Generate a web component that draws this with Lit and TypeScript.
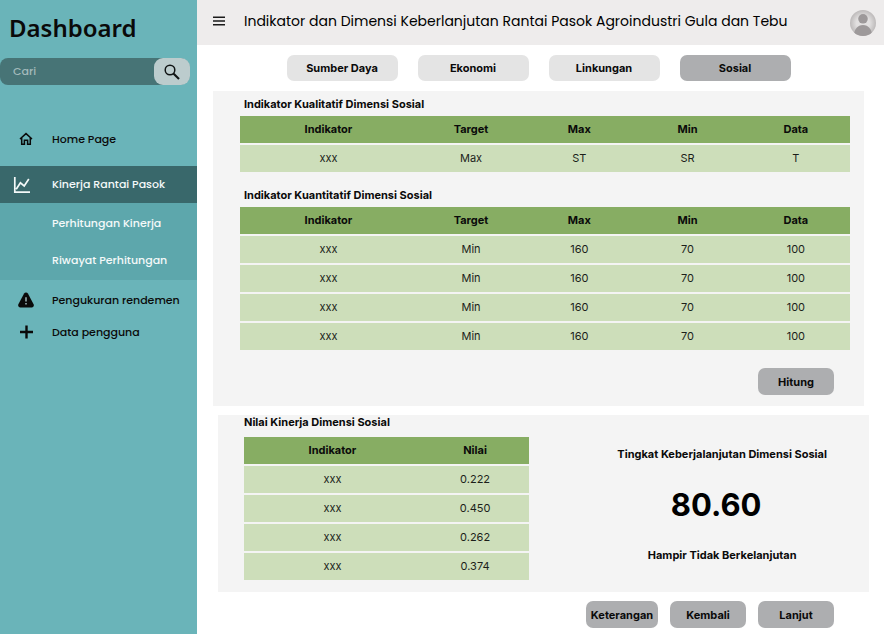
import { LitElement, html, css, svg } from "lit";
import { customElement, property, state } from "lit/decorators.js";
import { classMap } from "lit/directives/class-map.js";

@customElement("data-grid")
class DataGrid extends LitElement {
  @property({ attribute: false }) columns: string[] = [];
  @property({ attribute: false }) rows: string[][] = [];
  @property() label = "";

  static styles = css`
    :host {
      display: block;
    }
    .table {
      width: 100%;
      border-collapse: separate;
      border-spacing: 0;
      table-layout: fixed;
      font-size: 11px;
      line-height: 15px;
      text-align: center;
    }
    .head,
    .cell {
      padding: 6px 0;
      overflow-wrap: anywhere;
    }
    .head {
      background: #87ad63;
      font-weight: 700;
    }
    .cell {
      background: #cddeba;
      background-clip: padding-box;
      border-top: 2px solid #f4f4f4;
      color: #1c1f1a;
    }
    .wide {
      width: 29%;
    }
    .half {
      width: 62%;
    }
  `;

  render() {
    const two = this.columns.length === 2;
    return html`
      <table class="table" aria-label=${this.label}>
        <thead>
          <tr>
            ${this.columns.map(
              (c, i) => html`<th
                scope="col"
                class=${classMap({ head: true, wide: i === 0 && !two, half: i === 0 && two })}
              >${c}</th>`
            )}
          </tr>
        </thead>
        <tbody>
          ${this.rows.map(
            (r) => html`<tr>${r.map((v) => html`<td class="cell">${v}</td>`)}</tr>`
          )}
        </tbody>
      </table>
    `;
  }
}

const homeIcon = svg`<svg class="icon" width="14" height="14" viewBox="0 0 14 14" fill="none" stroke="currentColor" stroke-width="1.5" aria-hidden="true">
  <path d="M1 7 7 1.6 13 7M2.7 5.8V12.3H5.4V8.2H8.6V12.3H11.3V5.8"/>
</svg>`;
const chartIcon = svg`<svg class="icon" width="18" height="18" viewBox="0 0 18 18" fill="none" stroke="currentColor" stroke-width="1.7" aria-hidden="true">
  <path d="M1.8 1V16.2H17M3.2 13.2 7.4 6.8 11.2 10 15.8 3"/>
</svg>`;
const warnIcon = svg`<svg class="icon" width="16" height="16" viewBox="0 0 16 16" aria-hidden="true">
  <path fill="currentColor" d="M8 .4C8.9.4 9.5.8 9.9 1.5L15.6 12.2C16.3 13.7 15.5 15.5 13.7 15.5H2.3C.5 15.5-.3 13.7.4 12.2L6.1 1.5C6.5.8 7.1.4 8 .4Z"/>
  <path stroke="#c4dfe1" stroke-width="1.2" d="M8 5.3V9.6M8 11V12.4"/>
</svg>`;
const plusIcon = svg`<svg class="icon" width="14" height="14" viewBox="0 0 14 14" stroke="currentColor" stroke-width="2.4" aria-hidden="true">
  <path d="M7.5 .6V13.4M1 7H14"/>
</svg>`;
const searchIcon = svg`<svg width="16" height="16" viewBox="0 0 16 16" fill="none" stroke="#101414" aria-hidden="true">
  <circle cx="6" cy="6" r="4.8" stroke-width="1.5"/>
  <path stroke-width="2.1" d="M9.4 9.4 15 15"/>
</svg>`;
const menuIcon = svg`<svg width="12" height="10" viewBox="0 0 12 10" stroke="#1a1a1a" stroke-width="1.5" aria-hidden="true">
  <path d="M0 1.2H12M0 5H12M0 8.8H12"/>
</svg>`;
const avatar = svg`<svg width="26" height="26" viewBox="0 0 26 26" aria-hidden="true">
  <defs>
    <radialGradient id="disc"><stop offset="0.5" stop-color="#e2e0e0"/><stop offset="1" stop-color="#bdbaba"/></radialGradient>
    <clipPath id="round"><circle cx="13" cy="13" r="13"/></clipPath>
  </defs>
  <circle cx="13" cy="13" r="13" fill="url(#disc)"/>
  <g fill="#9d999a" clip-path="url(#round)">
    <circle cx="13" cy="8.8" r="4.8"/>
    <path d="M4 26C4 19 7.6 15 13 15S22 19 22 26Z"/>
  </g>
</svg>`;

const FULL_COLUMNS = ["Indikator", "Target", "Max", "Min", "Data"];

@customElement("app-root")
class AppRoot extends LitElement {
  @state() private tab = "Sosial";

  static styles = css`
    :host {
      display: grid;
      grid-template-columns: 197px minmax(0, 1fr);
      min-height: 100vh;
      background: #fff;
      color: #0a0a0a;
      font-family: Inter, "Liberation Sans", sans-serif;
      font-size: 11px;
    }
    .side {
      background: #6ab4b9;
      font-family: Poppins, Inter, sans-serif;
      font-weight: 500;
    }
    .brand {
      margin: 0;
      padding: 8px 9px 10px;
      font: 600 24px/40px "Noto Sans", sans-serif;
    }
    .search {
      display: flex;
      height: 27px;
      margin-right: 7px;
      background: #477476;
      border-radius: 8px 10px 10px 8px;
    }
    .query {
      flex: 1;
      min-width: 0;
      border: 0;
      padding: 0 13px;
      background: none;
      color: #fff;
      font: inherit;
    }
    .query::placeholder {
      color: #a3babb;
      opacity: 1;
    }
    .find {
      display: grid;
      place-items: center;
      width: 36px;
      border: 0;
      padding: 0;
      border-radius: 9px;
      background: #bccccd;
    }
    .nav {
      padding-top: 38px;
    }
    .link {
      display: grid;
      grid-template-columns: 52px 1fr;
      align-items: center;
      height: 32px;
      color: inherit;
      text-decoration: none;
      white-space: nowrap;
    }
    .icon {
      justify-self: center;
    }
    .active,
    .sub {
      height: 37px;
      color: #f4f9f9;
    }
    .active {
      margin-top: 11px;
      background: #39686b;
    }
    .active .icon {
      justify-self: start;
      margin-left: 13px;
    }
    .sub {
      padding-left: 52px;
      display: flex;
    }
    .group {
      padding: 2px 0 1px;
      margin-bottom: 4px;
      background: #5da7ac;
    }
    .bar {
      display: flex;
      align-items: center;
      justify-content: space-between;
      height: 45px;
      padding: 0 8px 0 16px;
      background: #eeecec;
    }
    .lead {
      display: flex;
      align-items: center;
      gap: 19px;
      padding-bottom: 3px;
    }
    .plain {
      display: grid;
      border: 0;
      padding: 0;
      background: none;
    }
    .title {
      margin: 0;
      font: 400 14px/20px Poppins, Inter, sans-serif;
      color: #000;
    }
    .tabs {
      display: flex;
      justify-content: center;
      gap: 20px;
      padding: 10px 4px 10px 0;
    }
    .btn {
      height: 26px;
      border: 0;
      padding: 0;
      border-radius: 7px;
      background: #adaeb0;
      color: inherit;
      font: 700 11px/26px Inter, sans-serif;
    }
    .tab {
      width: 111px;
      background: #e4e4e4;
    }
    .tab.on {
      background: #adaeb0;
    }
    .panel {
      background: #f4f4f4;
    }
    .inputs {
      margin: 0 20px 0 16px;
      padding: 1px 14px 11px 27px;
    }
    .caption {
      margin: 0 0 0 4px;
      font-size: 11px;
      font-weight: 700;
      line-height: 24px;
    }
    .next {
      margin-top: 11px;
    }
    .actions {
      display: flex;
      justify-content: flex-end;
    }
    .calc {
      margin-top: 18px;
      padding-right: 16px;
    }
    .act {
      width: 76px;
      height: 27px;
    }
    .act.slim {
      width: 72px;
    }
    .result {
      display: grid;
      grid-template-columns: 21fr 25fr;
      margin: 9px 15px 0 21px;
      padding: 0 0 12px 26px;
    }
    .tight {
      margin: 0 0 8px;
      line-height: 14px;
    }
    .score {
      display: flex;
      flex-direction: column;
      align-items: center;
      gap: 28px;
      padding: 31px 0 0 46px;
      font-weight: 700;
      line-height: 16px;
    }
    .score p {
      margin: 0;
    }
    .score .value {
      padding-right: 12px;
      font-size: 31px;
      line-height: 29px;
      color: #000;
    }
    .foot {
      gap: 12px;
      padding: 9px 50px 6px 0;
    }
  `;

  render() {
    return html`
      <aside class="side">
        <h2 class="brand">Dashboard</h2>
        <form class="search" role="search" @submit=${(e: Event) => e.preventDefault()}>
          <input class="query" type="text" placeholder="Cari" aria-label="Cari" />
          <button class="find" aria-label="Cari">${searchIcon}</button>
        </form>
        <nav class="nav">
          <a class="link" href="#home">${homeIcon}<span>Home Page</span></a>
          <a class="link active" href="#kinerja" aria-current="page">${chartIcon}<span>Kinerja Rantai Pasok</span></a>
          <div class="group">
            <a class="link sub" href="#perhitungan">Perhitungan Kinerja</a>
            <a class="link sub" href="#riwayat">Riwayat Perhitungan</a>
          </div>
          <a class="link" href="#rendemen">${warnIcon}<span>Pengukuran rendemen</span></a>
          <a class="link" href="#pengguna">${plusIcon}<span>Data pengguna</span></a>
        </nav>
      </aside>
      <main>
        <header class="bar">
          <div class="lead">
            <button class="plain" aria-label="Menu">${menuIcon}</button>
            <h1 class="title">Indikator dan Dimensi Keberlanjutan Rantai Pasok Agroindustri Gula dan Tebu</h1>
          </div>
          <button class="plain" aria-label="Profil">${avatar}</button>
        </header>
        <div class="tabs">
          ${["Sumber Daya", "Ekonomi", "Linkungan", "Sosial"].map(
            (t) => html`<button
              class=${classMap({ btn: true, tab: true, on: t === this.tab })}
              aria-pressed=${t === this.tab}
              @click=${() => (this.tab = t)}
            >${t}</button>`
          )}
        </div>
        <section class="panel inputs">
          <h2 class="caption">Indikator Kualitatif Dimensi Sosial</h2>
          <data-grid label="Indikator Kualitatif" .columns=${FULL_COLUMNS} .rows=${[["xxx", "Max", "ST", "SR", "T"]]}></data-grid>
          <h2 class="caption next">Indikator Kuantitatif Dimensi Sosial</h2>
          <data-grid
            label="Indikator Kuantitatif"
            .columns=${FULL_COLUMNS}
            .rows=${Array.from({ length: 4 }, () => ["xxx", "Min", "160", "70", "100"])}
          ></data-grid>
          <div class="actions calc"><button class="btn act">Hitung</button></div>
        </section>
        <section class="panel result">
          <div>
            <h2 class="caption tight">Nilai Kinerja Dimensi Sosial</h2>
            <data-grid
              label="Nilai Kinerja"
              .columns=${["Indikator", "Nilai"]}
              .rows=${["0.222", "0.450", "0.262", "0.374"].map((v) => ["xxx", v])}
            ></data-grid>
          </div>
          <div class="score">
            <p>Tingkat Keberjalanjutan Dimensi Sosial</p>
            <p class="value">80.60</p>
            <p>Hampir Tidak Berkelanjutan</p>
          </div>
        </section>
        <div class="actions foot">
          <button class="btn act slim">Keterangan</button>
          <button class="btn act">Kembali</button>
          <button class="btn act">Lanjut</button>
        </div>
      </main>
    `;
  }
}
